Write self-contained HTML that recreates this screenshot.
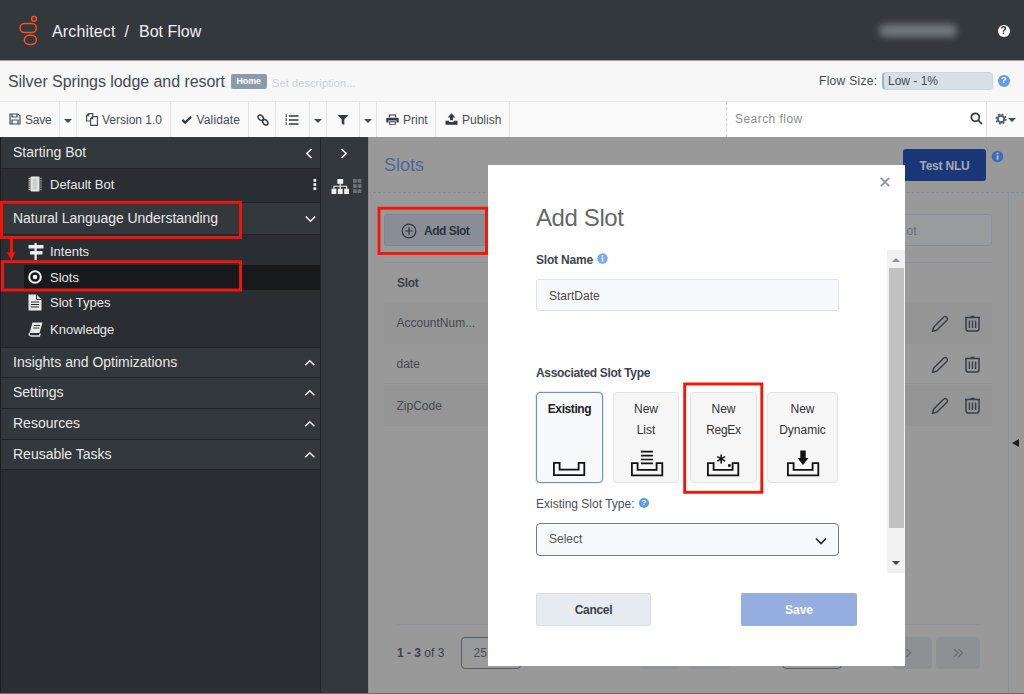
<!DOCTYPE html>
<html>
<head>
<meta charset="utf-8">
<title>Architect / Bot Flow</title>
<style>
*{box-sizing:border-box;margin:0;padding:0}
html,body{width:1024px;height:694px;overflow:hidden;background:#fff;font-family:"Liberation Sans",sans-serif;}
body{position:relative;color:#444a52;font-size:12px}
.abs{position:absolute}
#hdr{left:0;top:0;width:1024px;height:60px;background:#33383d}
#hdr .t{position:absolute;top:21.7px;color:#f1f1f1;font-size:16px;line-height:20px;white-space:nowrap}
#titlebar{left:0;top:60px;width:1024px;height:42px;background:#f7f7f7}
#toolbar{left:0;top:101px;width:1024px;height:36px;background:#fafafa;border-top:1px solid #e4e6e8}
.tb{position:absolute;top:0;height:35px;border-right:1px solid #e2e4e7;font-size:12px;line-height:36px;color:#484e56;white-space:nowrap}
.caret{position:absolute;top:16.5px;width:0;height:0;border-left:4px solid transparent;border-right:4px solid transparent;border-top:4px solid #444a52}
#side{left:0;top:137px;width:320px;height:557px;background:#2a2e33}
.sh{position:absolute;left:0;width:320px;background:#33383d;color:#e8e8e8;font-size:14px;border-bottom:1px solid #202428;white-space:nowrap}
.sh span{position:absolute;left:13px}
.si{position:absolute;left:0;width:320px;color:#e8e8e8;font-size:13px;white-space:nowrap}
.up{position:absolute;left:304px;top:14px;width:8px;height:8px;border-left:1.600px solid #f0f0f0;border-top:1.600px solid #f0f0f0;transform:rotate(45deg) scale(0.900)}
#strip{left:320px;top:137px;width:48px;height:557px;background:#33383d;border-left:1px solid #202428}
#main{left:368px;top:137px;width:656px;height:557px;background:#999999}
.row{position:absolute;left:16px;width:608px;height:42px;border-bottom:1px solid #949494;font-size:12px;line-height:42px;color:#46494e;white-space:nowrap}
.row span{position:absolute;left:12.500px;top:0}
#modal{left:488px;top:165px;width:417px;height:501px;background:#fff}
.card{position:absolute;top:226px;height:91px;border:1px solid #e3e3e3;border-radius:4px;background:#f6f6f6;font-size:12px;line-height:20.500px;color:#333;text-align:center;padding-top:6px;white-space:nowrap}
.card b{color:#222;letter-spacing:-0.400px}
</style>
</head>
<body>
<div id="hdr" class="abs">
  <svg class="abs" style="left:14px;top:10px" width="30" height="40" viewBox="0 0 30 40" fill="none" stroke="#ff4f1f" stroke-width="1.5">
    <circle cx="20" cy="8.8" r="2.4"/>
    <rect x="6" y="13.6" width="16.4" height="8.8" rx="4.4"/>
    <rect x="10.4" y="25.2" width="12" height="9.2" rx="4.6"/>
  </svg>
  <span class="t" style="left:52px;letter-spacing:0.15px">Architect</span>
  <span class="t" style="left:124.5px">/</span>
  <span class="t" style="left:139px">Bot Flow</span>
  <div class="abs" style="left:879px;top:24px;width:78px;height:13px;border-radius:6px;background:#72777c;filter:blur(3.500px)"></div>
  <div class="abs" style="left:997.500px;top:24.500px;width:12px;height:12px;border-radius:6px;background:#fff;color:#1d2024;font-size:10px;font-weight:bold;line-height:12px;text-align:center">?</div>
</div>
<div id="titlebar" class="abs"><div class="abs" style="left:0;top:0;width:1024px;height:1px;background:#9b9d9f"></div>
  <span class="abs" style="left:8px;top:11.5px;font-size:16px;line-height:20px;color:#444a52;white-space:nowrap;letter-spacing:-0.060px">Silver Springs lodge and resort</span>
  <span class="abs" style="left:231px;top:14px;width:35.500px;height:15px;border-radius:2px;background:#8c9bab;color:#fff;font-size:8.800px;font-weight:bold;line-height:15px;text-align:center">Home</span>
  <span class="abs" style="left:272px;top:16px;font-size:11px;line-height:14px;color:#cdd1d6;white-space:nowrap;letter-spacing:0.100px">Set description...</span>
  <span class="abs" style="left:819px;top:13px;font-size:12px;line-height:16px;color:#444a52;white-space:nowrap;letter-spacing:0.300px">Flow Size:</span>
  <div class="abs" style="left:882px;top:11.5px;width:111px;height:18.5px;border-radius:4px;background:#d7dfe7;border:1px solid #cdd5e0;border-left:2px solid #9db1d0"></div>
  <span class="abs" style="left:888px;top:13px;font-size:12px;line-height:16px;color:#444a52;white-space:nowrap">Low - 1%</span>
  <div class="abs" style="left:998px;top:15.2px;width:11.5px;height:11.5px;border-radius:6px;background:#5f9cf0;color:#fff;font-size:9px;font-weight:bold;line-height:11.5px;text-align:center">?</div>
</div>
<div id="toolbar" class="abs">
  <div class="tb" style="left:0;width:60px"><span class="abs" style="left:25px;letter-spacing:-0.2px">Save</span>
    <svg class="abs" style="left:9px;top:11px" width="12" height="12" viewBox="0 0 12 12" fill="none" stroke="#444a52" stroke-width="1.2"><path d="M1 1h8l2 2v8H1z"/><path d="M3 1v3h5V1M3 11V7h6v4"/></svg></div>
  <div class="tb" style="left:60px;width:17px"><span class="caret" style="left:4px"></span></div>
  <div class="tb" style="left:77px;width:94px"><span class="abs" style="left:25px">Version 1.0</span>
    <svg class="abs" style="left:8.5px;top:11px" width="12" height="13" viewBox="0 0 12 13" fill="none" stroke="#444a52" stroke-width="1.1"><path d="M4.5 8H0.6V2.6L2.6 0.6H6.800V3.5M0.6 2.6H2.6V0.6"/><path d="M4.6 5.6L6.6 3.6H11.4V12.4H4.6zM4.6 5.6H6.6V3.6"/></svg></div>
  <div class="tb" style="left:171px;width:78px"><span class="abs" style="left:25.5px;letter-spacing:0.15px">Validate</span>
    <svg class="abs" style="left:9.5px;top:12.5px" width="12" height="10" viewBox="0 0 12 10" fill="none" stroke="#333a42" stroke-width="2.3"><path d="M1.300 4.800l2.900 2.800L10 1.800"/></svg></div>
  <div class="tb" style="left:249px;width:27px">
    <svg class="abs" style="left:8px;top:11.5px" width="12" height="12" viewBox="0 0 12 12" fill="none" stroke="#333a42" stroke-width="1.5"><ellipse cx="3.7" cy="3.7" rx="3" ry="2.2" transform="rotate(45 3.7 3.7)"/><ellipse cx="8.3" cy="8.3" rx="3" ry="2.2" transform="rotate(45 8.3 8.3)"/></svg></div>
  <div class="tb" style="left:276px;width:34px">
    <svg class="abs" style="left:9px;top:11.7px" width="14" height="12" viewBox="0 0 14 12" fill="none" stroke="#333a42" stroke-width="1.7"><path d="M4 2h9.500M4 6h9.500M4 10h9.500"/><path d="M1.2 0.300v11.600" stroke-width="1.100" stroke-dasharray="2.600 1.400"/></svg></div>
  <div class="tb" style="left:310px;width:17px"><span class="caret" style="left:4px"></span></div>
  <div class="tb" style="left:327px;width:33px">
    <svg class="abs" style="left:10px;top:12px" width="12" height="12" viewBox="0 0 12 12" fill="#333a42"><path d="M0.5 1h11L7.3 5.6V11L4.7 9.6V5.6z"/></svg></div>
  <div class="tb" style="left:360px;width:17px"><span class="caret" style="left:4px"></span></div>
  <div class="tb" style="left:377px;width:59px"><span class="abs" style="left:26px">Print</span>
    <svg class="abs" style="left:9px;top:12px" width="13" height="11.300" viewBox="0 0 13 12" preserveAspectRatio="none" fill="#333a42"><path d="M3 0.5h7v3H9V1.5H4v2H3z"/><path d="M1.5 4h10a1.2 1.2 0 0 1 1.2 1.2V9H10.5V7h-8v2H0.3V5.2A1.2 1.2 0 0 1 1.5 4z"/><path d="M3.2 7.8h6.6V11.5H3.2zM4.2 8.8v1.7h4.6V8.8z" fill-rule="evenodd"/></svg></div>
  <div class="tb" style="left:436px;width:74px"><span class="abs" style="left:26px">Publish</span>
    <svg class="abs" style="left:9px;top:11px" width="13" height="12" viewBox="0 0 13 12" fill="#333a42"><path d="M6.5 0.300L10.300 4.500H8v2.800H5V4.500H2.700z"/><path d="M0.500 7.800h3.400l0.700 1.100h3.800l0.700-1.100h3.400v3.900H0.500z"/></svg></div>
  <div class="abs" style="left:726px;top:0;width:261px;height:35px;background:#fff;border-left:1px dashed #cfcfcf;border-right:1px solid #dedede">
    <span class="abs" style="left:8px;top:0;line-height:34px;font-size:12px;color:#8d8d8d;letter-spacing:0.450px;white-space:nowrap">Search flow</span>
    <svg class="abs" style="left:242.5px;top:10px" width="13" height="13" viewBox="0 0 13 13" fill="none" stroke="#33383d" stroke-width="1.7"><circle cx="5.300" cy="5.300" r="4"/><path d="M8.300 8.300l3.700 3.700"/></svg>
  </div>
  <div class="abs" style="left:988px;top:0;width:36px;height:34px">
    <svg class="abs" style="left:7px;top:11px" width="12" height="12" viewBox="0 0 12 12"><circle cx="6" cy="6" r="3.300" fill="none" stroke="#5a6270" stroke-width="2.200"/><circle cx="6" cy="6" r="4.800" fill="none" stroke="#5a6270" stroke-width="1.700" stroke-dasharray="1.900 1.870"/></svg>
    <span class="caret" style="left:20px;top:15.5px"></span>
  </div>
</div>
<div id="side" class="abs">
  <div class="abs" style="left:0;top:0;width:1px;height:557px;background:#1a1d20;z-index:3"></div>
  <div class="sh" style="top:0;height:32px;line-height:31px"><span>Starting Bot</span>
    <svg class="abs" style="left:305px;top:11px" width="8" height="11" viewBox="0 0 8 11" fill="none" stroke="#f0f0f0" stroke-width="1.6"><path d="M6.500 1L1.800 5.500L6.500 10"/></svg></div>
  <div class="si" style="top:32px;height:33px;line-height:31px"><span class="abs" style="left:50px">Default Bot</span>
    <svg class="abs" style="left:28px;top:6.500px" width="14" height="16" viewBox="0 0 14 17" preserveAspectRatio="none"><rect x="2.500" y="0.500" width="9" height="16" rx="1" fill="#e8e8e8"/><path d="M0.500 2.500h13M0.500 4.500h13M0.500 6.500h13M0.500 8.500h13M0.500 10.500h13M0.500 12.500h13M0.500 14.500h13" stroke="#e8e8e8" stroke-width="1" stroke-dasharray="2 10"/><rect x="4.500" y="2.500" width="5" height="12" fill="#d0d0d0"/></svg>
    <svg class="abs" style="left:313px;top:10px" width="3.700" height="11" viewBox="0 0 4 12" fill="#f0f0f0"><rect x="0.500" y="0" width="3" height="3"/><rect x="0.500" y="4.500" width="3" height="3"/><rect x="0.500" y="9" width="3" height="3"/></svg></div>
  <div class="sh" style="top:65px;height:33px;line-height:30px;border-top:1px solid #202428"><span style="letter-spacing:-0.04px">Natural Language Understanding</span>
    <svg class="abs" style="left:304.5px;top:11.5px" width="11" height="8" viewBox="0 0 11 8" fill="none" stroke="#f0f0f0" stroke-width="1.5"><path d="M0.8 1.5L5.5 6.2L10.2 1.5"/></svg></div>
  <div class="si" style="top:102px;height:26px;line-height:26px"><span class="abs" style="left:50px">Intents</span>
    <svg class="abs" style="left:28px;top:4px" width="16" height="17" viewBox="0 0 16 17" fill="#f0f0f0"><rect x="6.500" y="0" width="2.200" height="17"/><rect x="0.500" y="2" width="15" height="3.600" rx="0.500"/><rect x="2" y="8" width="12.500" height="3.600" rx="0.500"/></svg></div>
  <div class="si" style="top:128px;left:24px;width:296px;height:25px;line-height:25px;background:#17191c"><span class="abs" style="left:26px">Slots</span>
    <svg class="abs" style="left:4px;top:5px" width="14" height="14" viewBox="0 0 14 14"><circle cx="7" cy="7" r="5.800" fill="none" stroke="#f0f0f0" stroke-width="2"/><circle cx="7" cy="7" r="2.300" fill="#f0f0f0"/></svg></div>
  <div class="si" style="top:153px;height:26px;line-height:26px"><span class="abs" style="left:50px">Slot Types</span>
    <svg class="abs" style="left:28px;top:4px" width="14" height="17" viewBox="0 0 14 17"><path d="M0.500 0.500h8l5 5v11h-13z" fill="#e8e8e8"/><path d="M8.500 0.500v5h5" fill="none" stroke="#2a2e33" stroke-width="1"/><path d="M3 8h8M3 10.500h8M3 13h8" stroke="#2a2e33" stroke-width="1.200"/></svg></div>
  <div class="si" style="top:180px;height:26px;line-height:26px"><span class="abs" style="left:50px">Knowledge</span>
    <svg class="abs" style="left:28px;top:5px" width="15" height="15" viewBox="0 0 15 15"><path d="M4.500 0.500h10l-3 10.500h-10z" fill="#e8e8e8"/><path d="M1.500 11q-1 2.500 1.500 3h8.500l0.800-2.500" fill="none" stroke="#e8e8e8" stroke-width="1.300"/><path d="M6 3.500h6M5.300 6h6" stroke="#2a2e33" stroke-width="1"/></svg></div>
  <div class="sh" style="top:210px;height:31px;line-height:29px;border-top:1px solid #202428"><span>Insights and Optimizations</span><svg class="abs" style="left:304px;top:11px" width="12" height="8" viewBox="0 0 12 8" fill="none" stroke="#f0f0f0" stroke-width="1.5"><path d="M1.2 6.3L5.800 1.700L10.400 6.300"/></svg></div>
  <div class="sh" style="top:241px;height:31px;line-height:29px"><span>Settings</span><svg class="abs" style="left:304px;top:11px" width="12" height="8" viewBox="0 0 12 8" fill="none" stroke="#f0f0f0" stroke-width="1.5"><path d="M1.2 6.3L5.800 1.700L10.400 6.300"/></svg></div>
  <div class="sh" style="top:272px;height:31px;line-height:29px"><span>Resources</span><svg class="abs" style="left:304px;top:11px" width="12" height="8" viewBox="0 0 12 8" fill="none" stroke="#f0f0f0" stroke-width="1.5"><path d="M1.2 6.3L5.800 1.700L10.400 6.300"/></svg></div>
  <div class="sh" style="top:303px;height:30px;line-height:29px"><span>Reusable Tasks</span><svg class="abs" style="left:304px;top:11px" width="12" height="8" viewBox="0 0 12 8" fill="none" stroke="#f0f0f0" stroke-width="1.5"><path d="M1.2 6.3L5.800 1.700L10.400 6.300"/></svg></div>
</div>
<div id="strip" class="abs">
  <svg class="abs" style="left:19px;top:11px" width="8" height="11" viewBox="0 0 8 11" fill="none" stroke="#f0f0f0" stroke-width="1.600"><path d="M1.500 1L6.200 5.500L1.500 10"/></svg>
  <svg class="abs" style="left:10px;top:42px" width="18.500" height="15.500" viewBox="0 0 19 16" fill="#f0f0f0"><rect x="6.500" y="0" width="6" height="5"/><rect x="0.500" y="10" width="5" height="5.500"/><rect x="7" y="10" width="5" height="5.500"/><rect x="13.500" y="10" width="5" height="5.500"/><path d="M3 10V7.500h13V10M9.500 5v5" fill="none" stroke="#f0f0f0" stroke-width="1.200"/></svg>
  <svg class="abs" style="left:32.300px;top:42px" width="8.400" height="14" viewBox="0 0 9 15" fill="#6d7379"><rect x="0" y="0" width="4" height="4"/><rect x="5" y="0" width="4" height="4"/><rect x="0" y="5.500" width="4" height="4"/><rect x="5" y="5.500" width="4" height="4"/><rect x="0" y="11" width="4" height="4"/><rect x="5" y="11" width="4" height="4"/></svg>
</div>
<div id="main" class="abs">
  <div class="abs" style="left:0;top:0;width:1px;height:557px;background:#8c8c8c"></div>
  <span class="abs" style="left:16px;top:16.500px;font-size:18px;line-height:22px;color:#4c6797;white-space:nowrap">Slots</span>
  <div class="abs" style="left:0;top:55px;width:656px;height:0;border-top:1px dashed #858a93"></div>
  <div class="abs" style="left:640px;top:56px;width:1px;height:501px;background:#8b9097"></div>
  <div class="abs" style="left:535px;top:12px;width:83px;height:32px;border-radius:3px;background:#1a3878;color:#a3a9b5;font-size:12px;font-weight:bold;line-height:34px;text-align:center;letter-spacing:-0.2px">Test NLU</div>
  <svg class="abs" style="left:623px;top:13px" width="13" height="13" viewBox="0 0 13 13"><circle cx="6.500" cy="6.500" r="5.800" fill="#3f6cb6"/><rect x="5.700" y="5.300" width="1.700" height="4.500" fill="#b9c2d1"/><circle cx="6.500" cy="3.500" r="1" fill="#b9c2d1"/></svg>
  <div class="abs" style="left:16px;top:77px;width:110px;height:32px;border-radius:3px;background:#878e98;border:1px dotted #7a818a"></div>
  <svg class="abs" style="left:32.700px;top:85.500px" width="16" height="16" viewBox="0 0 16 16" fill="none" stroke="#2f353d" stroke-width="1.200"><circle cx="8" cy="8" r="6.800"/><path d="M8 4.300v7.400M4.300 8h7.400"/></svg>
  <span class="abs" style="left:56px;top:87px;font-size:12px;font-weight:bold;line-height:14px;color:#2c333d;white-space:nowrap;letter-spacing:-0.500px">Add Slot</span>
  <div class="abs" style="left:525px;top:77px;width:99px;height:32px;border-radius:3px;background:#9a9b9d;border:1px solid #8a9099"></div>
  <span class="abs" style="left:538.5px;top:86.5px;font-size:12px;line-height:14px;color:#6a7078">ot</span>
  <div class="abs" style="left:16px;top:125px;width:608px;height:1px;background:#8e9196"></div>
  <span class="abs" style="left:29px;top:139px;font-size:12px;font-weight:bold;line-height:14px;color:#3c4047;letter-spacing:-0.300px">Slot</span>
  <div class="row" style="top:165px;background:#959595"><span>AccountNum...</span><svg class="abs" style="left:547px;top:12px" width="19" height="19" viewBox="0 0 19 19" fill="none" stroke="#3a3f47" stroke-width="1.500" stroke-linejoin="round"><path d="M1.500 17.300L2.600 13.200L12.800 3a2.300 2.300 0 0 1 3.200 3.200L5.700 16.300Z"/></svg><svg class="abs" style="left:580px;top:12px" width="17" height="19" viewBox="0 0 17 19" fill="none" stroke="#3a3f47" stroke-width="1.500"><path d="M1 3.500h15M6.500 2.600h4" /><path d="M2 3.500v11.300a2.200 2.200 0 0 0 2.200 2.200h8.600a2.200 2.200 0 0 0 2.200-2.200V3.500"/><path d="M5.400 6.500v7.500M8.500 6.500v7.500M11.600 6.500v7.500" stroke-width="1.400"/></svg></div>
  <div class="row" style="top:207px;height:40px;line-height:41px"><span>date</span><svg class="abs" style="left:547px;top:11px" width="19" height="19" viewBox="0 0 19 19" fill="none" stroke="#3a3f47" stroke-width="1.500" stroke-linejoin="round"><path d="M1.500 17.300L2.600 13.200L12.800 3a2.300 2.300 0 0 1 3.200 3.200L5.700 16.300Z"/></svg><svg class="abs" style="left:580px;top:11px" width="17" height="19" viewBox="0 0 17 19" fill="none" stroke="#3a3f47" stroke-width="1.500"><path d="M1 3.500h15M6.500 2.600h4" /><path d="M2 3.500v11.300a2.200 2.200 0 0 0 2.200 2.200h8.600a2.200 2.200 0 0 0 2.200-2.200V3.500"/><path d="M5.400 6.500v7.500M8.500 6.500v7.500M11.600 6.500v7.500" stroke-width="1.400"/></svg></div>
  <div class="row" style="top:248px;height:41px;background:#959595"><span>ZipCode</span><svg class="abs" style="left:547px;top:11px" width="19" height="19" viewBox="0 0 19 19" fill="none" stroke="#3a3f47" stroke-width="1.500" stroke-linejoin="round"><path d="M1.500 17.300L2.600 13.200L12.800 3a2.300 2.300 0 0 1 3.200 3.200L5.700 16.300Z"/></svg><svg class="abs" style="left:580px;top:11px" width="17" height="19" viewBox="0 0 17 19" fill="none" stroke="#3a3f47" stroke-width="1.500"><path d="M1 3.500h15M6.500 2.600h4" /><path d="M2 3.500v11.300a2.200 2.200 0 0 0 2.200 2.200h8.600a2.200 2.200 0 0 0 2.200-2.200V3.500"/><path d="M5.400 6.500v7.500M8.500 6.500v7.500M11.600 6.500v7.500" stroke-width="1.400"/></svg></div>
  <div class="abs" style="left:29px;top:487px;width:583px;height:1px;background:#909398"></div>
  <span class="abs" style="left:29px;top:509px;font-size:12px;line-height:14px;color:#3c4047;white-space:nowrap"><b>1 - 3</b> of 3</span>
  <div class="abs" style="left:93px;top:500px;width:60px;height:32px;border-radius:4px;border:1px solid #565d66;background:#9a9a9a"></div>
  <span class="abs" style="left:105.5px;top:509px;font-size:12px;line-height:14px;color:#4a4f57">25</span>
  <div class="abs" style="left:272px;top:500px;width:40px;height:32px;border-radius:4px;background:#939496"></div>
  <div class="abs" style="left:322px;top:500px;width:40px;height:32px;border-radius:4px;background:#939496"></div>
  <div class="abs" style="left:414px;top:500px;width:60px;height:32px;border-radius:4px;border:1px solid #565d66"></div>
  <div class="abs" style="left:524px;top:500px;width:40px;height:32px;border-radius:4px;background:#8f9094"></div>
  <div class="abs" style="left:568px;top:500px;width:44px;height:32px;border-radius:4px;background:#8f9094"></div>
  <svg class="abs" style="left:537px;top:511px" width="8" height="10" viewBox="0 0 8 10" fill="none" stroke="#6c6f75" stroke-width="1.300"><path d="M1.500 1l4 4l-4 4"/></svg>
  <svg class="abs" style="left:585px;top:511px" width="11" height="10" viewBox="0 0 11 10" fill="none" stroke="#6c6f75" stroke-width="1.300"><path d="M1 1l4 4l-4 4M5.500 1l4 4l-4 4"/></svg>
  <div class="abs" style="left:644px;top:302px;width:0;height:0;border-top:4.500px solid transparent;border-bottom:4.500px solid transparent;border-right:7px solid #1d1d1d"></div>
</div>
<div id="modal" class="abs"><div class="abs" style="left:0;top:1px;width:417px;height:500px">
  <svg class="abs" style="left:392px;top:11px" width="10" height="10" viewBox="0 0 10 10" fill="none" stroke="#8798ad" stroke-width="1.900"><path d="M0.800 0.800l8.400 8.400M9.200 0.800l-8.400 8.400"/></svg>
  <span class="abs" style="left:48px;top:37px;font-size:24px;line-height:30px;color:#666;white-space:nowrap;letter-spacing:-0.400px">Add Slot</span>
  <span class="abs" style="left:48px;top:87px;font-size:12px;font-weight:bold;line-height:14px;color:#3e444c;white-space:nowrap;letter-spacing:-0.200px">Slot Name</span>
  <svg class="abs" style="left:109px;top:87px" width="11" height="11" viewBox="0 0 11 11"><circle cx="5.500" cy="5.500" r="5.200" fill="#78a9f0"/><rect x="4.700" y="4.500" width="1.600" height="4" fill="#fff"/><circle cx="5.500" cy="2.800" r="0.900" fill="#fff"/></svg>
  <div class="abs" style="left:48px;top:113px;width:303px;height:32px;border-radius:2px;background:#f8f9fb;border:1px solid #dde4ee"></div>
  <span class="abs" style="left:61px;top:123px;font-size:12px;line-height:14px;color:#4a4a4a">StartDate</span>
  <span class="abs" style="left:48px;top:200px;font-size:12px;font-weight:bold;line-height:14px;color:#3e444c;white-space:nowrap;letter-spacing:-0.320px">Associated Slot Type</span>
  <div class="card" style="left:48px;width:67px;background:#f8f9fb;border-color:#6e8fc2;box-shadow:0 0 2px #9db7de"><b>Existing</b>
    <svg class="abs" style="left:15.8px;top:69.2px" width="33" height="15" viewBox="0 0 33 15" fill="none" stroke="#111" stroke-width="1.8"><path d="M0.9 0.9h5.7v6.7h19v-6.7h5.7v12.2h-30.4z" transform="translate(0,0)"/></svg></div>
  <div class="card" style="left:125px;width:66px">New<br>List
    <svg class="abs" style="left:16.9px;top:57px" width="33" height="28" viewBox="0 0 33 28" fill="none" stroke="#111" stroke-width="1.8"><path d="M0.9 0.9h5.7v6.7h19v-6.7h5.7v12.2h-30.4z" transform="translate(0,12.2)"/><path d="M9.9 1.7h12M9.9 5.6h12M9.9 9.5h12M9.9 13.4h12" stroke-width="1.7"/></svg></div>
  <div class="card" style="left:202px;width:67px">New<br><span style="letter-spacing:-0.3px">RegEx</span>
    <svg class="abs" style="left:16.2px;top:57px" width="33" height="28" viewBox="0 0 33 28" fill="none" stroke="#111" stroke-width="1.8"><path d="M0.9 0.9h5.7v6.7h19v-6.7h5.7v12.2h-30.4z" transform="translate(0,12.2)"/><path d="M14.2 4.4v9M10.300 6.650l7.800 4.500M18.100 6.650l-7.800 4.500" stroke-width="1.6"/><rect x="21.100" y="14.200" width="2.600" height="2.600" fill="#111" stroke="none"/></svg></div>
  <div class="card" style="left:279px;width:71px">New<br>Dynamic
    <svg class="abs" style="left:18.9px;top:57px" width="33" height="28" viewBox="0 0 33 28" fill="none" stroke="#111" stroke-width="1.8"><path d="M0.9 0.9h5.7v6.7h19v-6.7h5.7v12.2h-30.4z" transform="translate(0,12.2)"/><path d="M13.300 0.600h5.400v7.400h2.700l-5.400 7l-5.400-7h2.700z" fill="#111" stroke="none"/></svg></div>
  <span class="abs" style="left:48px;top:331px;font-size:12px;line-height:14px;color:#4a4f57;white-space:nowrap">Existing Slot Type:</span>
  <div class="abs" style="left:151px;top:332px;width:10px;height:10px;border-radius:5px;background:#5b9bea;color:#fff;font-size:8px;font-weight:bold;line-height:10px;text-align:center">?</div>
  <div class="abs" style="left:48px;top:357px;width:303px;height:33px;border-radius:4px;background:#f8f9fb;border:1px solid #747b84"></div>
  <span class="abs" style="left:61px;top:366px;font-size:12px;line-height:14px;color:#555">Select</span>
  <svg class="abs" style="left:327px;top:371px" width="12" height="8" viewBox="0 0 12 8" fill="none" stroke="#222" stroke-width="1.600"><path d="M1 1.500l5 5l5-5"/></svg>
  <div class="abs" style="left:399px;top:84px;width:18px;height:323px;background:#f1f1f1"></div>
  <div class="abs" style="left:401px;top:102px;width:15px;height:260px;background:#c1c1c1"></div>
  <div class="abs" style="left:404px;top:92px;width:0;height:0;border-left:4px solid transparent;border-right:4px solid transparent;border-bottom:4px solid #8f9297"></div>
  <div class="abs" style="left:404px;top:395px;width:0;height:0;border-left:4px solid transparent;border-right:4px solid transparent;border-top:4px solid #444"></div>
  <div class="abs" style="left:48px;top:427px;width:115px;height:33px;border-radius:2px;background:#e6eaf1;border:1px solid #d8dee8;color:#3a3f47;font-size:12px;font-weight:bold;line-height:32px;text-align:center;letter-spacing:-0.3px">Cancel</div>
  <div class="abs" style="left:253px;top:427px;width:116px;height:33px;border-radius:2px;background:#94aee0;color:#fff;font-size:12px;font-weight:bold;line-height:34px;text-align:center">Save</div>
</div></div>
<div class="abs" style="left:0;top:693px;width:1024px;height:1px;background:#6e6e6e;z-index:40"></div>
<svg id="anno" class="abs" style="left:0;top:0;z-index:50;pointer-events:none" width="1024" height="694" viewBox="0 0 1024 694" fill="none" stroke="#f5140a" stroke-width="2.900">
  <rect x="1.500" y="202.300" width="239" height="35.200"/>
  <rect x="2.500" y="261.700" width="238" height="28.300"/>
  <path d="M11.400 239V254" stroke-width="3"/>
  <path d="M7 252.300h8.600l-4.300 8z" fill="#f5140a" stroke="none"/>
  <rect x="379" y="208.200" width="107.500" height="45.300"/>
  <rect x="684.700" y="384" width="77.100" height="108.300"/>
</svg>
</body>
</html>
